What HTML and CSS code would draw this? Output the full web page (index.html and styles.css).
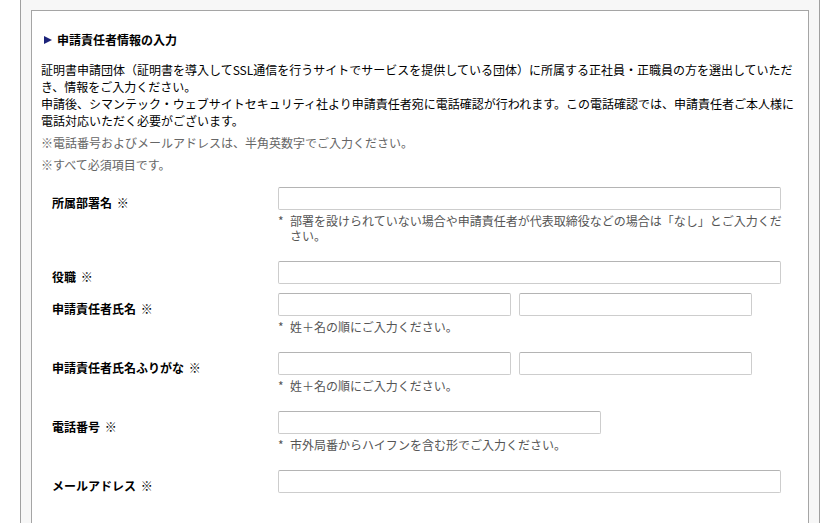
FILE: index.html
```html
<!doctype html>
<html lang="ja">
<head>
    <meta charset="utf-8">
    <meta name="viewport" content="width=device-width, initial-scale=1">
    <title>申請責任者情報の入力</title>
    <link rel="stylesheet" href="styles.css">
</head>
<body>
<div class="page">
    <section class="panel">
        <h2 class="panel-title"><span class="arrow"></span>申請責任者情報の入力</h2>

        <p class="intro">証明書申請団体（証明書を導入してSSL通信を行うサイトでサービスを提供している団体）に所属する正社員・正職員の方を選出していただき、情報をご入力ください。<br>
            申請後、シマンテック・ウェブサイトセキュリティ社より申請責任者宛に電話確認が行われます。この電話確認では、申請責任者ご本人様に電話対応いただく必要がございます。</p>

        <div class="notices">
            <p>※電話番号およびメールアドレスは、半角英数字でご入力ください。</p>
            <p>※すべて必須項目です。</p>
        </div>

        <form class="form">
            <div class="field">
                <label class="field-label" for="dept">所属部署名 <span class="req">※</span></label>
                <div class="field-body">
                    <input class="input input-full" type="text" id="dept">
                    <p class="note"><span class="note-mark">*</span><span>部署を設けられていない場合や申請責任者が代表取締役などの場合は「なし」とご入力ください。</span></p>
                </div>
            </div>

            <div class="field">
                <label class="field-label" for="title">役職 <span class="req">※</span></label>
                <div class="field-body">
                    <input class="input input-full" type="text" id="title">
                </div>
            </div>

            <div class="field">
                <label class="field-label" for="last-name">申請責任者氏名 <span class="req">※</span></label>
                <div class="field-body">
                    <div class="pair">
                        <input class="input input-half" type="text" id="last-name">
                        <input class="input input-half" type="text">
                    </div>
                    <p class="note"><span class="note-mark">*</span><span>姓＋名の順にご入力ください。</span></p>
                </div>
            </div>

            <div class="field">
                <label class="field-label" for="last-kana">申請責任者氏名ふりがな <span class="req">※</span></label>
                <div class="field-body">
                    <div class="pair">
                        <input class="input input-half" type="text" id="last-kana">
                        <input class="input input-half" type="text">
                    </div>
                    <p class="note"><span class="note-mark">*</span><span>姓＋名の順にご入力ください。</span></p>
                </div>
            </div>

            <div class="field">
                <label class="field-label" for="tel">電話番号 <span class="req">※</span></label>
                <div class="field-body">
                    <input class="input input-tel" type="text" id="tel">
                    <p class="note"><span class="note-mark">*</span><span>市外局番からハイフンを含む形でご入力ください。</span></p>
                </div>
            </div>

            <div class="field">
                <label class="field-label" for="mail">メールアドレス <span class="req">※</span></label>
                <div class="field-body">
                    <input class="input input-full" type="text" id="mail">
                </div>
            </div>
        </form>
    </section>
</div>
</body>
</html>
```

FILE: styles.css
```css
/*
 * Reset
 */

*,
*::before,
*::after {
    box-sizing: border-box;
    margin: 0;
    padding: 0;
}

body {
    background-color: #fff;
    color: #000;
    font-family: "Noto Sans CJK JP", "Noto Sans", sans-serif;
    font-size: 12px;
    line-height: 17px;
}

/*
 * Layout
 */

.page {
    background-color: #f7f7f7;
    border-left: 1px solid #a0a0a0;
    border-right: 1px solid #a0a0a0;
    margin-left: 20px;
    min-height: 560px;
    padding: 10px;
    width: 800px;
}

.panel {
    background-color: #fff;
    border: 1px solid #a5a5a5;
    padding: 21px 8px 60px 9px;
}

.panel-title {
    align-items: center;
    display: flex;
    font-size: 12px;
    line-height: 16px;
    margin-bottom: 13px;
    margin-left: 3px;
}

.arrow {
    border-bottom: 4.5px solid transparent;
    border-left: 8px solid #1c237a;
    border-top: 4.5px solid transparent;
    display: inline-block;
    margin-right: 5px;
}

.intro {
    line-height: 17px;
}

.notices {
    color: #666;
    margin-top: 3px;
}

.notices p {
    margin-top: 5px;
}

/*
 * Form
 */

.form {
    margin-top: 14px;
}

.field {
    display: grid;
    grid-template-columns: 237px 1fr;
    margin-bottom: 9px;
}

.field-label {
    font-weight: bold;
    line-height: 14px;
    padding-left: 11px;
    padding-top: 9px;
}

.req {
    font-weight: 900;
    margin-left: 2px;
}

.input {
    background-color: #fff;
    border: 1px solid #cdcdcd;
    border-radius: 2px;
    border-top-color: #b4b4b4;
    display: block;
    font: inherit;
    height: 23px;
    padding: 2px 4px;
}

.input-full {
    width: 503px;
}

.input-half {
    width: 233px;
}

.input-tel {
    width: 323px;
}

.pair {
    display: flex;
    gap: 8px;
}

.note {
    color: #555;
    display: flex;
    line-height: 15px;
    margin-bottom: 9px;
    margin-top: 3px;
    width: 505px;
}

.note-mark {
    flex: none;
    width: 12px;
}
```
